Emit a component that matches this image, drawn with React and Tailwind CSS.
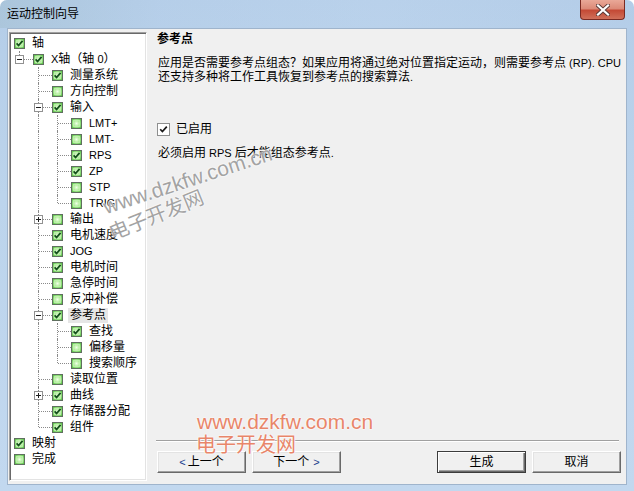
import React from 'react';

const FONT = "font-['Liberation_Sans','Noto_Sans_CJK_SC',sans-serif]";

function Txt({ s }) {
  const parts = s.split(/([\x00-\x7F]+)/).filter(Boolean);
  return parts.map((p, i) =>
    /^[\x00-\x7F]+$/.test(p) ? (
      <span key={i} className="text-[11px]">{p}</span>
    ) : (
      <span key={i}>{p}</span>
    )
  );
}

const rows = [
  { l: 0, c: true, t: '轴' },
  { l: 1, e: '-', c: true, t: 'X轴（轴 0）' },
  { l: 2, c: true, t: '测量系统' },
  { l: 2, c: false, t: '方向控制' },
  { l: 2, e: '-', c: true, t: '输入' },
  { l: 3, c: false, t: 'LMT+' },
  { l: 3, c: false, t: 'LMT-' },
  { l: 3, c: true, t: 'RPS' },
  { l: 3, c: true, t: 'ZP' },
  { l: 3, c: false, t: 'STP' },
  { l: 3, c: false, t: 'TRIG' },
  { l: 2, e: '+', c: false, t: '输出' },
  { l: 2, c: true, t: '电机速度' },
  { l: 2, c: true, t: 'JOG' },
  { l: 2, c: true, t: '电机时间' },
  { l: 2, c: false, t: '急停时间' },
  { l: 2, c: false, t: '反冲补偿' },
  { l: 2, e: '-', c: true, t: '参考点', sel: true },
  { l: 3, c: true, t: '查找' },
  { l: 3, c: false, t: '偏移量' },
  { l: 3, c: false, t: '搜索顺序' },
  { l: 2, c: false, t: '读取位置' },
  { l: 2, e: '+', c: true, t: '曲线' },
  { l: 2, c: true, t: '存储器分配' },
  { l: 2, c: true, t: '组件' },
  { l: 0, c: true, t: '映射' },
  { l: 0, c: false, t: '完成' },
];

function continues(i, k) {
  for (let j = i + 1; j < rows.length; j++) {
    if (rows[j].l <= k) return rows[j].l === k;
  }
  return false;
}

function GreenBox({ checked }) {
  return (
    <span className="relative block w-[11px] h-[11px] shrink-0 border border-[#5f6f5f] bg-[radial-gradient(circle_at_50%_50%,#f0ffe8_0%,#b9f0a4_40%,#4dbd3a_100%)]">
      <span className="absolute inset-[1px] border border-[#c9f5b8]/70" />
      {checked && (
        <svg viewBox="0 0 9 9" className="absolute left-0 top-0 w-[9px] h-[9px]">
          <path d="M1.6 4.3 L3.6 6.4 L7.6 1.9" stroke="#13501a" strokeWidth="1.7" fill="none" />
        </svg>
      )}
    </span>
  );
}

function Expander({ type }) {
  return (
    <span className="absolute left-[4px] top-[4px] w-[9px] h-[9px] border border-[#919191] bg-white">
      <span className="absolute left-[1px] top-[3px] w-[5px] h-[1px] bg-[#1e1e1e]" />
      {type === '+' && <span className="absolute left-[3px] top-[1px] w-[1px] h-[5px] bg-[#1e1e1e]" />}
    </span>
  );
}

function Row({ r, i }) {
  const cols = [];
  for (let k = 1; k <= r.l; k++) {
    const cont = continues(i, k);
    if (k < r.l) {
      cols.push(
        <span key={k} className="relative block w-[19px] h-full shrink-0">
          {cont && <span className="absolute left-[8px] top-0 h-[16px] border-l border-dotted border-[#8a8a8a]" />}
        </span>
      );
    } else {
      cols.push(
        <span key={k} className="relative block w-[19px] h-full shrink-0">
          <span className={`absolute left-[8px] top-0 border-l border-dotted border-[#8a8a8a] ${cont ? 'h-[16px]' : 'h-[8px]'}`} />
          <span className="absolute left-[9px] top-[8px] w-[13px] border-t border-dotted border-[#8a8a8a]" />
          {r.e && <Expander type={r.e} />}
        </span>
      );
    }
  }
  return (
    <div className="flex items-center h-[16px]">
      {cols}
      <span className="ml-[3px]">
        <GreenBox checked={r.c} />
      </span>
      <span
        className={`ml-[5px] px-[2px] h-[15px] leading-[15px] whitespace-nowrap text-[12px] text-black ${r.sel ? 'bg-[#e6e6e6]' : ''}`}
      >
        <Txt s={r.t} />
      </span>
    </div>
  );
}

function Button({ children, def }) {
  return (
    <div
      className={`w-[89px] h-[22px] flex items-center justify-center text-[12px] text-black bg-[#f0f0f0] ${
        def
          ? 'border border-[#3c3c3c] shadow-[inset_1px_1px_0_#ffffff,inset_-1px_-1px_0_#696969,inset_-2px_-2px_0_#a0a0a0]'
          : 'border border-t-white border-l-white border-b-[#696969] border-r-[#696969] shadow-[inset_-1px_-1px_0_#a0a0a0,inset_1px_1px_0_#e3e3e3]'
      }`}
    >
      {children}
    </div>
  );
}

export default function App() {
  return (
    <div className={`${FONT} relative w-[634px] h-[491px] overflow-hidden rounded-t-[7px] bg-[linear-gradient(180deg,#b4cde8_0%,#bcd4ec_40%,#c2d8ef_100%)] flex flex-col px-[7px] pb-[6px]`}>
      {/* title bar */}
      <div className="h-[28px] flex items-start justify-between bg-[linear-gradient(90deg,rgba(150,180,190,0.3)_0%,rgba(190,214,238,0.15)_25%,rgba(200,222,244,0.25)_60%,rgba(180,204,232,0.1)_100%)] -mx-[7px] px-[7px]">
        <div className="mt-[6px] text-[12px] leading-[16px] text-black">运动控制向导</div>
        <div className="w-[45px] h-[20px] mr-[2px] rounded-b-[4px] border border-t-0 border-[#7a2a22] bg-[linear-gradient(180deg,#e9a898_0%,#dc8a78_45%,#c44a36_55%,#d0705a_100%)] flex items-center justify-center">
          <svg viewBox="0 0 14 12" className="w-[14px] h-[12px]">
            <path d="M2 1.5 L12 10.5 M12 1.5 L2 10.5" stroke="#5a3a38" strokeWidth="4" strokeLinecap="square" />
            <path d="M2 1.5 L12 10.5 M12 1.5 L2 10.5" stroke="#ffffff" strokeWidth="2.2" strokeLinecap="square" />
          </svg>
        </div>
      </div>

      {/* client area */}
      <div className="flex-1 flex bg-[#f0f0f0] border border-[#9fb4cc]">
        {/* tree */}
        <div className="ml-[1px] mt-[3px] mb-[3px] w-[138px] shrink-0 border border-t-[#a0a0a0] border-l-[#a0a0a0] border-b-white border-r-white shadow-[inset_1px_1px_0_#696969,inset_-1px_-1px_0_#e3e3e3] bg-white pl-[1px] pt-[2px] overflow-hidden">
          {rows.map((r, i) => (
            <Row key={i} r={r} i={i} />
          ))}
        </div>

        {/* right panel */}
        <div className="flex-1 flex flex-col pl-[9px] pr-[9px] pt-[2px] pb-[11px] text-[12px] text-black">
          <div className="font-bold leading-[16px] pl-[1px]">参考点</div>
          <div className="mt-[9px] leading-[14px] whitespace-nowrap pl-[2px]">
            <div>
              <Txt s="应用是否需要参考点组态？如果应用将通过绝对位置指定运动，则需要参考点 (RP). CPU" />
            </div>
            <div>
              <Txt s="还支持多种将工作工具恢复到参考点的搜索算法." />
            </div>
          </div>
          <div className="mt-[37px] h-[16px] flex items-center pl-[1px]">
            <span className="relative block w-[13px] h-[13px] border border-[#8e8f8f] bg-white">
              <svg viewBox="0 0 11 11" className="absolute left-0 top-0 w-[11px] h-[11px]">
                <path d="M2.2 5.2 L4.4 7.6 L8.8 2.6" stroke="#1a1a1a" strokeWidth="1.7" fill="none" />
              </svg>
            </span>
            <span className="ml-[6px] leading-[16px]">已启用</span>
          </div>
          <div className="mt-[8px] leading-[16px] pl-[2px]">
            <Txt s="必须启用 RPS 后才能组态参考点." />
          </div>
          <div className="flex-1" />
          <div className="h-[2px] border-t border-[#a0a0a0] border-b border-b-white mr-[2px]" />
          <div className="mt-[9px] flex justify-between pl-[1px]">
            <div className="flex gap-[6px]">
              <Button>
                <span className="text-[11px] text-[#1a3c8c] mr-[2px]">&lt;</span>上一个
              </Button>
              <Button>
                下一个<span className="text-[11px] text-[#1a3c8c] ml-[4px]">&gt;</span>
              </Button>
            </div>
            <div className="flex gap-[6px]">
              <Button def>生成</Button>
              <Button>取消</Button>
            </div>
          </div>
        </div>
      </div>

      {/* watermarks */}
      <div className="absolute left-[107px] top-[196px] origin-bottom-left -rotate-[18deg] text-[21px] leading-[21px] text-[#a3a3a3] whitespace-nowrap font-['Liberation_Sans',sans-serif] [text-shadow:0_0_2px_#ffffff,0_0_2px_#ffffff]">
        www.dzkfw.com.cn
      </div>
      <div className="absolute left-[114px] top-[222px] origin-bottom-left -rotate-[22deg] text-[20px] leading-[22px] text-[#a3a3a3] whitespace-nowrap [text-shadow:0_0_2px_#ffffff,0_0_2px_#ffffff]">
        电子开发网
      </div>
      <div className="absolute left-[197px] top-[410px] text-[21px] leading-[24px] text-[#e8866a] whitespace-nowrap font-['Liberation_Sans',sans-serif] [text-shadow:0_0_2px_#ffffff,0_0_2px_#ffffff,0_0_1px_#ffffff]">
        www.dzkfw.com.cn
      </div>
      <div className="absolute left-[196px] top-[434px] text-[20px] leading-[22px] text-[#e8866a] whitespace-nowrap [text-shadow:0_0_2px_#ffffff,0_0_2px_#ffffff,0_0_1px_#ffffff]">
        电子开发网
      </div>
    </div>
  );
}
